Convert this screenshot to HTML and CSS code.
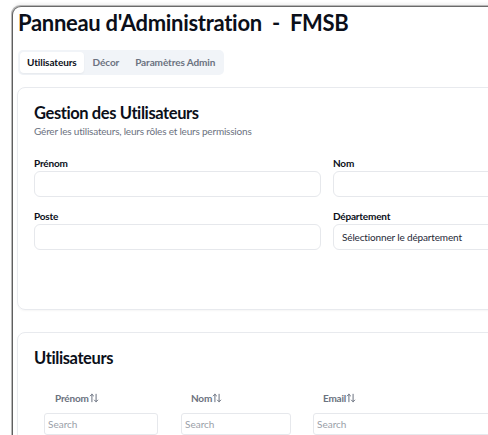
FILE: index.html
```html
<!DOCTYPE html>
<html lang="fr">
<head>
<meta charset="utf-8">
<title>Panneau d'Administration - FMSB</title>
<link rel="stylesheet" href="styles.css">
</head>
<body>
<div class="window">
  <h1 class="title">Panneau d'Administration &nbsp;-&nbsp; FMSB</h1>

  <div class="tabs">
    <button class="tab active">Utilisateurs</button>
    <button class="tab">Décor</button>
    <button class="tab">Paramètres Admin</button>
  </div>

  <section class="card form-card">
    <h2 class="card-title">Gestion des Utilisateurs</h2>
    <p class="card-sub">Gérer les utilisateurs, leurs rôles et leurs permissions</p>
    <div class="form-grid">
      <div class="field">
        <label>Prénom</label>
        <div class="input"></div>
      </div>
      <div class="field">
        <label>Nom</label>
        <div class="input"></div>
      </div>
      <div class="field">
        <label>Poste</label>
        <div class="input"></div>
      </div>
      <div class="field">
        <label>Département</label>
        <div class="input select">Sélectionner le département</div>
      </div>
    </div>
  </section>

  <section class="card table-card">
    <h2 class="card-title">Utilisateurs</h2>
    <div class="table">
      <div class="col c1">
        <div class="th">Prénom<svg class="sort" viewBox="0 0 12 12"><path d="M3.5 10.5V1.5M1.5 3.5l2-2 2 2" /><path d="M8.5 1.5v9M6.5 8.5l2 2 2-2" /></svg></div>
        <div class="search">Search</div>
      </div>
      <div class="col c2">
        <div class="th">Nom<svg class="sort" viewBox="0 0 12 12"><path d="M3.5 10.5V1.5M1.5 3.5l2-2 2 2" /><path d="M8.5 1.5v9M6.5 8.5l2 2 2-2" /></svg></div>
        <div class="search">Search</div>
      </div>
      <div class="col c3">
        <div class="th">Email<svg class="sort" viewBox="0 0 12 12"><path d="M3.5 10.5V1.5M1.5 3.5l2-2 2 2" /><path d="M8.5 1.5v9M6.5 8.5l2 2 2-2" /></svg></div>
        <div class="search">Search</div>
      </div>
    </div>
  </section>
</div>
</body>
</html>
```

FILE: styles.css
```css
html, body {
  margin: 0;
  padding: 0;
  background: #ffffff;
  overflow: hidden;
}

body {
  font-family: Lato, "Open Sans", "Liberation Sans", sans-serif;
  color: #0b0f19;
  width: 488px;
  height: 435px;
}

.window {
  margin: 6px 0 0 12px;
  width: 640px;
  height: 460px;
  border-left: 1px solid #5f5f5f;
  border-top: 1px solid #6a6a6a;
  border-top-left-radius: 9px;
  box-shadow: -1px -1px 0 #b8b8b8, 0 -3px 3px rgba(0,0,0,0.05);
  padding: 0 0 0 4px;
  box-sizing: border-box;
  background: #fff;
}

.title {
  margin: 0;
  padding: 0 0 0 1px;
  font-size: 22px;
  line-height: 31px;
  font-weight: 700;
  letter-spacing: -0.3px;
  white-space: pre;
}

.tabs {
  display: inline-flex;
  margin: 12px 0 0 1px;
  padding: 2px;
  background: #f1f4f8;
  border-radius: 5px;
  gap: 2px;
}

.tab {
  font-family: inherit;
  border: 0;
  background: transparent;
  font-size: 10px;
  font-weight: 700;
  color: #6b7280;
  padding: 0 7px;
  height: 21px;
  line-height: 21px;
  border-radius: 4px;
  letter-spacing: -0.1px;
}

.tab.active {
  background: #ffffff;
  color: #0b0f19;
  box-shadow: 0 1px 2px rgba(0,0,0,0.05);
}

.card {
  width: 620px;
  border: 1px solid #e8eaee;
  border-radius: 8px;
  box-sizing: border-box;
  padding: 13px 16px 0 16px;
  box-shadow: 0 1px 2px rgba(0,0,0,0.04);
}

.form-card {
  margin-top: 12px;
  height: 223px;
}

.table-card {
  margin-top: 22px;
  height: 140px;
}

.card-title {
  margin: 0;
  font-size: 16.5px;
  line-height: 24px;
  font-weight: 700;
  letter-spacing: -0.4px;
}

.card-sub {
  margin: -1px 0 0 0;
  font-size: 10px;
  line-height: 14px;
  color: #6b7280;
  letter-spacing: -0.2px;
}

.form-grid {
  display: grid;
  grid-template-columns: 287px 287px;
  column-gap: 12px;
  row-gap: 12px;
  margin-top: 18px;
}

.field label {
  display: block;
  font-size: 10px;
  line-height: 15px;
  font-weight: 700;
  color: #0b0f19;
  letter-spacing: -0.2px;
}

.input {
  height: 26px;
  border: 1px solid #e6e8ec;
  border-radius: 6px;
  box-sizing: border-box;
  font-size: 10px;
  line-height: 24px;
  padding: 0 8px;
  color: #1f2937;
  letter-spacing: -0.15px;
}

.table {
  display: flex;
  margin-top: 17px;
}

.col {
  padding: 0 10px;
  box-sizing: border-box;
}

.c1 { width: 137px; padding-right: 13px; }
.c2 { width: 132px; padding-right: 12px; }
.c3 { width: 200px; }

.th {
  display: flex;
  align-items: center;
  padding-left: 11px;
  height: 22px;
  font-size: 10px;
  font-weight: 700;
  color: #6b7280;
  letter-spacing: -0.2px;
}

.c2 .th, .c3 .th { padding-left: 10px; }

.sort {
  width: 10px;
  height: 10px;
  margin-left: 0;
  fill: none;
  stroke: #6b7280;
  stroke-width: 1.2;
  stroke-linecap: round;
  stroke-linejoin: round;
}

.search {
  margin-top: 4px;
  height: 22px;
  border: 1px solid #e6e8ec;
  border-radius: 3px;
  box-sizing: border-box;
  font-size: 10px;
  line-height: 20px;
  padding: 0 3px;
  color: #9aa0a8;
}
```
